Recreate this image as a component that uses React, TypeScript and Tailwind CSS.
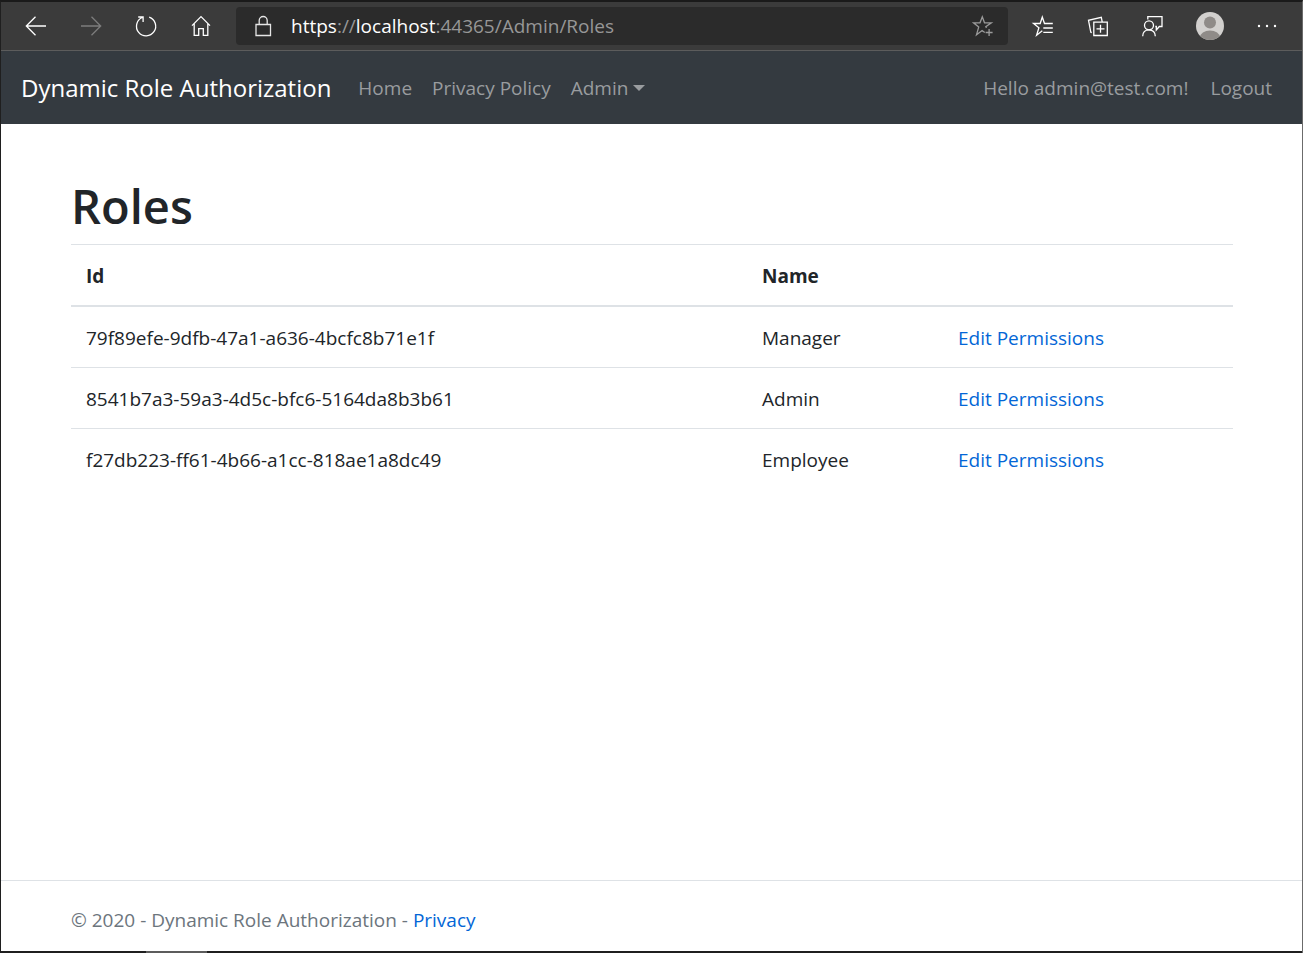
import React, { useState } from 'react';

interface Role {
  id: string;
  name: string;
}

const roles: Role[] = [
  { id: '79f89efe-9dfb-47a1-a636-4bcfc8b71e1f', name: 'Manager' },
  { id: '8541b7a3-59a3-4d5c-bfc6-5164da8b3b61', name: 'Admin' },
  { id: 'f27db223-ff61-4b66-a1cc-818ae1a8dc49', name: 'Employee' },
];

interface IconProps {
  children: React.ReactNode;
  className?: string;
}

function Icon({ children, className = '' }: IconProps) {
  return (
    <svg
      width="24"
      height="24"
      viewBox="0 0 24 24"
      fill="none"
      stroke="currentColor"
      strokeWidth="1.3"
      className={className}
      aria-hidden="true"
    >
      {children}
    </svg>
  );
}

interface ToolButtonProps {
  label: string;
  children: React.ReactNode;
  disabled?: boolean;
}

function ToolButton({ label, children, disabled }: ToolButtonProps) {
  return (
    <button
      type="button"
      aria-label={label}
      disabled={disabled}
      className="flex h-10 w-[55px] shrink-0 items-center justify-center text-white disabled:text-[#7d7d7d]"
    >
      {children}
    </button>
  );
}

function BrowserBar() {
  return (
    <div className="flex h-[49px] items-center border-b border-[#5c5c5c] bg-[#3b3b3b] px-[7px]">
      <ToolButton label="Back">
        <Icon>
          <path d="M22 12H2.5M11.5 2.8L2.3 12l9.2 9.2" />
        </Icon>
      </ToolButton>
      <ToolButton label="Forward" disabled>
        <Icon>
          <path d="M2 12h19.5M12.5 2.8L21.7 12l-9.2 9.2" />
        </Icon>
      </ToolButton>
      <ToolButton label="Refresh">
        <Icon>
          <path d="M15.2 3.2A9.6 9.6 0 1 1 8.2 3.5M4.2 3h4.9v5" />
        </Icon>
      </ToolButton>
      <ToolButton label="Home">
        <Icon>
          <path d="M3 11.6l9-9 9 9M5.2 9.7v11.6h4.5v-6.6h4.6v6.6h4.5V9.7" />
        </Icon>
      </ToolButton>

      {/* Address bar */}
      <div className="ml-2 flex h-[38px] min-w-0 flex-1 items-center rounded bg-[#2b2b2b] pl-[15px] pr-[13px]">
        <Icon className="shrink-0 text-[#e6e6e6]">
          <path d="M5 10.5h14.5v11H5zM8.2 10.5v-4a4 4 0 0 1 8 0v4" />
        </Icon>
        <div
          role="textbox"
          aria-label="Address"
          className="ml-4 min-w-0 flex-1 truncate text-[19px] leading-6 text-[#979797]"
        >
          <span className="text-white">https</span>://<span className="text-white">localhost</span>
          :44365/Admin/Roles
        </div>
        <button type="button" aria-label="Add this page to favorites" className="text-[#9a9a9a]">
          <Icon>
            <path d="M15.5 13.8l-.7-1.2 5.5-3.8h-6.8l-2.2-6L9 8.8H2.5l5.2 4.3-2.2 7.6 5.6-4.2 2.6 1.9M18.1 15v7M14.6 18.5h7" />
          </Icon>
        </button>
      </div>

      <div className="ml-[7px] flex items-center">
        <ToolButton label="Favorites">
          <Icon>
            <path d="M21.8 9.5h-8.3L11.3 3 9.2 9.5H2.5l5.4 4.3-2.3 7.5 5.7-4.5M12.3 14h9.5M12.3 18.3h9.5" />
          </Icon>
        </ToolButton>
        <ToolButton label="Collections">
          <Icon>
            <path d="M7.8 8.2h13.5v13.3H7.8zM14.5 10.8v8M10.5 14.8h8M5.8 18.5l-1-.2-2.3-12 12.8-3 .9 4.5" />
          </Icon>
        </ToolButton>
        <ToolButton label="Send feedback">
          <Icon>
            <circle cx="8" cy="11.3" r="4.5" />
            <path d="M1.7 22.2c0-3.8 2.6-6.4 6.3-6.4s6.3 2.6 6.3 6.4M6.8 5.5V2.7H21v9.8h-2.7l-3 3.5v-3.5h-1" />
          </Icon>
        </ToolButton>
      </div>
      <button
        type="button"
        aria-label="Profile"
        className="ml-px flex w-[57px] shrink-0 justify-center"
      >
        <svg width="28" height="28" viewBox="0 0 28 28" aria-hidden="true">
          <defs>
            <clipPath id="avatar">
              <circle cx="14" cy="14" r="14" />
            </clipPath>
          </defs>
          <g clipPath="url(#avatar)">
            <rect width="28" height="28" fill="#d2d0ce" />
            <circle cx="14" cy="10.5" r="6" fill="#8f8b88" />
            <ellipse cx="14" cy="25.5" rx="10" ry="7" fill="#8f8b88" />
          </g>
        </svg>
      </button>
      <button
        type="button"
        aria-label="Settings and more"
        className="flex w-[57px] shrink-0 justify-center text-white"
      >
        <svg width="24" height="24" viewBox="0 0 24 24" fill="currentColor" aria-hidden="true">
          <circle cx="4" cy="12" r="1.2" />
          <circle cx="12" cy="12" r="1.2" />
          <circle cx="20" cy="12" r="1.2" />
        </svg>
      </button>
    </div>
  );
}

function Navbar() {
  const [open, setOpen] = useState(false);

  return (
    <nav className="flex h-[73px] items-center bg-[#343a40] pl-5 pr-[30px] text-[19px] leading-[30px] text-[#999c9f]">
      <a href="#" className="text-2xl text-white">
        Dynamic Role Authorization
      </a>
      <ul className="ml-[27px] flex gap-5">
        <li>
          <a href="#home">Home</a>
        </li>
        <li>
          <a href="#privacy-policy">Privacy Policy</a>
        </li>
        <li className="relative">
          <button
            type="button"
            aria-expanded={open}
            onClick={() => setOpen(!open)}
            className="flex items-center gap-[5px]"
          >
            Admin
            <svg width="12" height="6" viewBox="0 0 12 6" fill="currentColor" aria-hidden="true">
              <path d="M0 0h12L6 6z" />
            </svg>
          </button>
          {open && (
            <div className="absolute left-0 top-full z-10 mt-2 w-40 rounded border border-gray-300 bg-white px-6 py-2 text-[#212529]">
              <a href="#roles">Roles</a>
            </div>
          )}
        </li>
      </ul>
      <div className="ml-auto flex gap-[22px]">
        <span>Hello admin@test.com!</span>
        <button type="button">Logout</button>
      </div>
    </nav>
  );
}

function RolesTable() {
  return (
    <table className="w-full table-fixed text-left">
      <colgroup>
        <col />
        <col className="w-[196px]" />
        <col className="w-[290px]" />
      </colgroup>
      <thead>
        <tr className="h-[61px] border-t border-b-2 border-[#dee2e6]">
          <th className="px-[15px] pt-0.5 font-bold">Id</th>
          <th className="px-[15px] pt-0.5 font-bold">Name</th>
          <th aria-label="Actions"></th>
        </tr>
      </thead>
      <tbody>
        {roles.map((role) => (
          <tr key={role.id} className="h-[61px] border-t border-[#dee2e6] first:h-[62px]">
            <td className="px-[15px] pt-0.5">{role.id}</td>
            <td className="px-[15px] pt-0.5">{role.name}</td>
            <td className="px-[15px] pt-0.5">
              <a href={`#${role.id}`} className="text-[#0366d6]">
                Edit Permissions
              </a>
            </td>
          </tr>
        ))}
      </tbody>
    </table>
  );
}

export default function App() {
  return (
    <div className="flex min-h-screen flex-col border-l border-r border-t-2 border-l-[#1f1f1f] border-r-[#6b6b6b] border-t-[#1a1a1a] bg-white font-['Open_Sans','Noto_Sans',sans-serif] text-[19px] leading-[30px] text-[#212529]">
      <BrowserBar />
      <Navbar />
      <main className="flex-1 pl-[70px] pr-[69px] pt-[52px]">
        <h1 className="mb-2 text-[47px] leading-[60px] font-semibold">Roles</h1>
        <RolesTable />
      </main>
      <footer className="border-t border-[#dee2e6] pl-[70px] pr-[69px] pt-6 pb-4 text-[#6c757d]">
        © 2020 - Dynamic Role Authorization -{' '}
        <a href="#privacy" className="text-[#0366d6]">
          Privacy
        </a>
      </footer>
      <div className="h-0.5 bg-[#1f1f1f] pl-[145px]">
        <div className="h-full w-[61px] bg-[#5c5c5c]" />
      </div>
    </div>
  );
}
